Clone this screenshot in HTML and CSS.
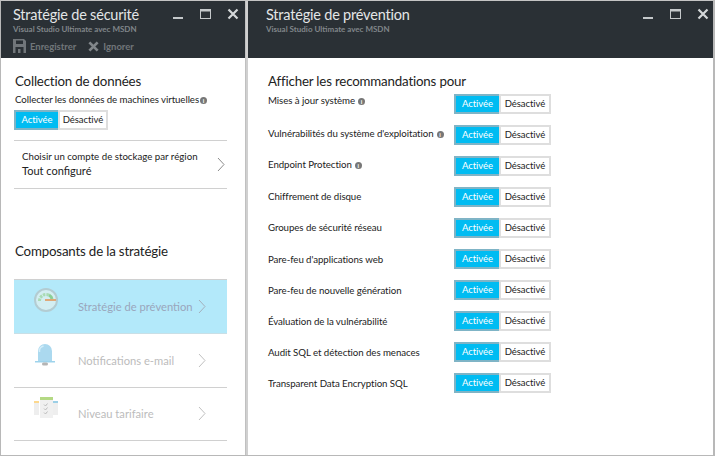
FILE: index.html
```html
<!DOCTYPE html>
<html lang="fr">
<head>
<meta charset="UTF-8" />
<meta name="viewport" content="width=device-width, initial-scale=1.0" />
<title>Stratégie de sécurité</title>
<link rel="stylesheet" href="styles.css">
</head>
<body>

<div class="blades">

  <section class="blade blade-left">
    <header class="blade-head">
      <div class="head-top">
        <div class="titles">
          <h1>Stratégie de sécurité</h1>
          <p class="sub">Visual Studio Ultimate avec MSDN</p>
        </div>
        <div class="win-btns">
          <svg width="12" height="12" viewBox="0 0 12 12"><rect x="1" y="9" width="10" height="2" fill="#c4c8ca"/></svg>
          <svg width="13" height="12" viewBox="0 0 13 12"><path d="M1 1h11v10H1z M2 3.500v6.500h9V3.500z" fill="#c4c8ca" fill-rule="evenodd"/></svg>
          <svg width="12" height="12" viewBox="0 0 12 12"><path d="M1.500 1.500l9 9M10.500 1.500l-9 9" stroke="#d4d7d9" stroke-width="2.200" fill="none"/></svg>
        </div>
      </div>
      <div class="commands">
        <span class="cmd">
          <svg width="13" height="14" viewBox="0 0 13 14"><path d="M0 0h11l2 2v12H0z M3 1.500v3.500h7V1.500z M2.500 8v6h8V8z M5 10h2.500v4H5z" fill="#71767a" fill-rule="evenodd"/></svg>
          Enregistrer
        </span>
        <span class="cmd">
          <svg width="11" height="11" viewBox="0 0 12 12"><path d="M1.500 1.500l9 9M10.500 1.500l-9 9" stroke="#81868a" stroke-width="3" fill="none"/></svg>
          Ignorer
        </span>
      </div>
    </header>

    <div class="blade-body">
      <h2 class="h-data">Collection de données</h2>
      <div class="collect-label">Collecter les données de machines virtuelles<span class="info">i</span></div>
      <div class="toggle toggle-left"><span class="on">Activée</span><span class="off">Désactivé</span></div>

      <div class="storage">
        <div class="storage-text">
          <div class="storage-small">Choisir un compte de stockage par région</div>
          <div class="storage-value">Tout configuré</div>
        </div>
        <svg class="chev" width="8" height="15" viewBox="0 0 8 15"><path d="M1 1l6 6.500-6 6.500" fill="none" stroke="#8c8c8c"/></svg>
      </div>

      <h2 class="h-comp">Composants de la stratégie</h2>
      <ul class="comps">
        <li class="comp comp-active">
          <span class="comp-icon">
            <svg width="24" height="24" viewBox="0 0 24 24">
              <circle cx="12" cy="12" r="11" fill="#d3eef2" stroke="#b3ccd2" stroke-width="2"/>
              <path d="M5.500 13a6.500 6.500 0 0 1 10-5.500" fill="none" stroke="#a9dbb4" stroke-width="3" stroke-dasharray="2.500 1"/>
              <path d="M15 7a6 6 0 0 1 3 4" fill="none" stroke="#8ccf96" stroke-width="3"/>
              <rect x="11" y="11" width="11" height="2" fill="#dfa878"/>
            </svg>
          </span>
          <span class="comp-text">Stratégie de prévention</span>
          <svg class="chev" width="8" height="15" viewBox="0 0 8 15"><path d="M1 1l6 6.500-6 6.500" fill="none" stroke="#a4b0bc"/></svg>
        </li>
        <li class="comp">
          <span class="comp-icon">
            <svg width="22" height="26" viewBox="0 0 22 26">
              <path d="M4 19V9a7 7 0 0 1 14 0v10z" fill="#abd9ef"/>
              <path d="M5.500 10a5.500 5.500 0 0 1 4-6" fill="none" stroke="#d3eefa" stroke-width="1.500"/>
              <rect x="1" y="19" width="20" height="1.500" fill="#9ed3ec"/>
              <rect x="8" y="20.500" width="6" height="3" rx="1.500" fill="#b4b4b4"/>
            </svg>
          </span>
          <span class="comp-text">Notifications e-mail</span>
          <svg class="chev" width="8" height="15" viewBox="0 0 8 15"><path d="M1 1l6 6.500-6 6.500" fill="none" stroke="#c0c0c0"/></svg>
        </li>
        <li class="comp">
          <span class="comp-icon">
            <svg width="24" height="22" viewBox="0 0 24 22">
              <rect x="0" y="5" width="5" height="14" fill="#eeeeee"/>
              <rect x="0" y="5" width="5" height="2" fill="#fcd88e"/>
              <rect x="19" y="5" width="5" height="14" fill="#eeeeee"/>
              <rect x="19" y="5" width="5" height="2" fill="#9ccfe6"/>
              <rect x="6" y="1" width="13" height="21" fill="#f0f0f0"/>
              <rect x="6" y="1" width="13" height="3" fill="#b4d984"/>
              <path d="M10 8.500l1.500 1.500 2-2.500M10 12.500l1.500 1.500 2-2.500M10 16.500l1.500 1.500 2-2.500" fill="none" stroke="#bcbcbc"/>
            </svg>
          </span>
          <span class="comp-text">Niveau tarifaire</span>
          <svg class="chev" width="8" height="15" viewBox="0 0 8 15"><path d="M1 1l6 6.500-6 6.500" fill="none" stroke="#c0c0c0"/></svg>
        </li>
      </ul>
    </div>
  </section>

  <section class="blade blade-right">
    <header class="blade-head">
      <div class="head-top">
        <div class="titles">
          <h1>Stratégie de prévention</h1>
          <p class="sub">Visual Studio Ultimate avec MSDN</p>
        </div>
        <div class="win-btns">
          <svg width="12" height="12" viewBox="0 0 12 12"><rect x="1" y="9" width="10" height="2" fill="#c4c8ca"/></svg>
          <svg width="13" height="12" viewBox="0 0 13 12"><path d="M1 1h11v10H1z M2 3.500v6.500h9V3.500z" fill="#c4c8ca" fill-rule="evenodd"/></svg>
          <svg width="12" height="12" viewBox="0 0 12 12"><path d="M1.500 1.500l9 9M10.500 1.500l-9 9" stroke="#d4d7d9" stroke-width="2.200" fill="none"/></svg>
        </div>
      </div>
    </header>

    <div class="blade-body body-right">
      <h2 class="h-reco">Afficher les recommandations pour</h2>
      <div class="reco-row first"><span class="reco-label">Mises à jour système<span class="info">i</span></span><div class="toggle"><span class="on">Activée</span><span class="off">Désactivé</span></div></div>
      <div class="reco-row with-info"><span class="reco-label">Vulnérabilités du système d'exploitation<span class="info">i</span></span><div class="toggle"><span class="on">Activée</span><span class="off">Désactivé</span></div></div>
      <div class="reco-row with-info"><span class="reco-label">Endpoint Protection<span class="info">i</span></span><div class="toggle"><span class="on">Activée</span><span class="off">Désactivé</span></div></div>
      <div class="reco-row"><span class="reco-label">Chiffrement de disque</span><div class="toggle"><span class="on">Activée</span><span class="off">Désactivé</span></div></div>
      <div class="reco-row"><span class="reco-label">Groupes de sécurité réseau</span><div class="toggle"><span class="on">Activée</span><span class="off">Désactivé</span></div></div>
      <div class="reco-row"><span class="reco-label">Pare-feu d'applications web</span><div class="toggle"><span class="on">Activée</span><span class="off">Désactivé</span></div></div>
      <div class="reco-row"><span class="reco-label">Pare-feu de nouvelle génération</span><div class="toggle"><span class="on">Activée</span><span class="off">Désactivé</span></div></div>
      <div class="reco-row"><span class="reco-label">Évaluation de la vulnérabilité</span><div class="toggle"><span class="on">Activée</span><span class="off">Désactivé</span></div></div>
      <div class="reco-row"><span class="reco-label">Audit SQL et détection des menaces</span><div class="toggle"><span class="on">Activée</span><span class="off">Désactivé</span></div></div>
      <div class="reco-row"><span class="reco-label">Transparent Data Encryption SQL</span><div class="toggle"><span class="on">Activée</span><span class="off">Désactivé</span></div></div>
    </div>
  </section>

</div>

</body>
</html>
```

FILE: styles.css
```css
* {
  box-sizing: border-box;
}
html, body {
  margin: 0;
  padding: 0;
}
body {
  font-family: Lato, Arial, sans-serif;
  color: #222;
  background: #fff;
  width: 715px;
  height: 456px;
  overflow: hidden;
}
h1, h2, p, ul {
  margin: 0;
  padding: 0;
  font-weight: normal;
}
.blades {
  display: flex;
  height: 456px;
  border-top: 1px solid #c4c4c4;
  border-left: 1px solid #b8b8b8;
  border-right: 2px solid #b8b8b8;
  border-bottom: 1px solid #b8b8b8;
}
.blade {
  display: flex;
  flex-direction: column;
}
.blade-left {
  width: 245px;
  border-right: 1px solid #c0c0c0;
}
.blade-right {
  flex: 1;
  border-left: 2px solid #d0d0d0;
}

/* header */
.blade-head {
  background: #2a3035;
  height: 57px;
  padding: 4px 6px 0 12px;
  flex: none;
}
.blade-right .blade-head {
  padding: 4px 4px 0 18px;
}
.head-top {
  display: flex;
  justify-content: space-between;
}
.blade-head h1 {
  font-size: 14.500px;
  letter-spacing: -0.200px;
  line-height: 19px;
  color: #e4e6e7;
}
.sub {
  font-size: 8px;
  line-height: 11px;
  font-weight: 700;
  color: #81868a;
}
.win-btns {
  display: flex;
  gap: 15px;
  padding-top: 3px;
}
.commands {
  display: flex;
  gap: 12px;
  margin-top: 4px;
}
.cmd {
  display: flex;
  align-items: center;
  gap: 4px;
  font-size: 9.500px;
  font-weight: 700;
  color: #71767a;
}

/* body */
.blade-body {
  padding: 0 18px 0 13px;
  flex: 1;
}
.h-data {
  font-size: 13.300px;
  letter-spacing: -0.180px;
  line-height: 18px;
  margin-top: 14px;
  margin-left: 1px;
}
.collect-label {
  font-size: 9.700px;
  letter-spacing: -0.070px;
  line-height: 14px;
  margin-left: 1px;
  margin-top: 2px;
}
.info {
  display: inline-block;
  width: 7px;
  height: 7px;
  border-radius: 50%;
  background: #777;
  color: #fff;
  font-size: 6px;
  letter-spacing: 0;
  line-height: 7px;
  font-weight: 700;
  text-align: center;
  margin-left: 3px;
}
.collect-label .info {
  margin-left: 1px;
}
.toggle {
  display: flex;
  width: 97px;
  height: 20px;
  font-size: 9.500px;
  letter-spacing: -0.050px;
  line-height: 16px;
  flex: none;
}
.toggle .on {
  width: 45px;
  background: #00bcf2;
  color: #fff;
  border: 2px solid #7fb4c6;
  border-right: none;
  text-align: center;
}
.toggle .off {
  flex: 1;
  background: #fff;
  border: 2px solid #dedede;
  text-align: center;
}
.toggle-left {
  width: 94px;
  margin-top: 4px;
}
.toggle-left .on {
  width: 44px;
}

.storage {
  margin-top: 10px;
  height: 49px;
  border-top: 1px solid #d0d0d0;
  border-bottom: 1px solid #d0d0d0;
  display: flex;
  justify-content: space-between;
  align-items: center;
  padding: 0 2px 0 8px;
}
.storage-text {
  padding-bottom: 2px;
}
.storage-small {
  font-size: 9.700px;
  line-height: 14px;
}
.storage-value {
  font-size: 11px;
  line-height: 15px;
}
.chev {
  flex: none;
}

.h-comp {
  font-size: 13.300px;
  letter-spacing: -0.180px;
  line-height: 18px;
  margin-top: 53px;
  margin-left: 1px;
}
.comps {
  list-style: none;
  margin-top: 19px;
  border-top: 1px solid #d0d0d0;
}
.comp {
  display: flex;
  align-items: center;
  height: 53.800px;
  border-bottom: 1px solid #d0d0d0;
  color: #bcbcbc;
  font-size: 11.200px;
}
.comp-active {
  background: #b3e9fa;
  color: #9aa6bc;
  border-bottom-color: #c9dfe6;
}
.comp-icon {
  width: 64px;
  padding-left: 20px;
  align-self: flex-start;
  padding-top: 8px;
  flex: none;
}
.comp-text {
  width: 120px;
  white-space: nowrap;
}

/* right blade */
.body-right {
  padding: 0 162px 0 20px;
}
.h-reco {
  font-size: 13.300px;
  letter-spacing: -0.180px;
  line-height: 18px;
  margin-top: 14px;
}
.reco-row {
  display: flex;
  justify-content: space-between;
  align-items: center;
  height: 31.100px;
  font-size: 9.700px;
  letter-spacing: -0.070px;
  line-height: 15px;
}
.reco-row.first {
  margin-top: -2px;
}
.reco-row.first .reco-label {
  margin-bottom: 6px;
}
.reco-row.with-info .reco-label {
  margin-bottom: 3px;
}
.reco-label {
  white-space: nowrap;
}
```
